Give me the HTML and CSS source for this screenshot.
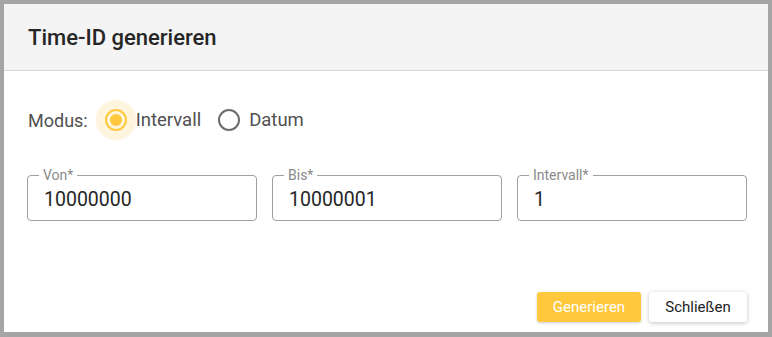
FILE: index.html
```html
<!DOCTYPE html>
<html lang="de">
<head>
    <meta charset="UTF-8">
    <title>Time-ID generieren</title>
    <link rel="stylesheet" href="styles.css">
</head>
<body>
    <div class="dialog">
        <!-- Kopfzeile -->
        <div class="dialog-header">
            <h2 class="dialog-title">Time-ID generieren</h2>
        </div>

        <div class="dialog-content">
            <!-- Modus Auswahl -->
            <div class="mode-row">
                <span class="mode-label">Modus:</span>
                <label class="radio-option checked">
                    <span class="radio-halo"><span class="radio-ring"><span class="radio-dot"></span></span></span>
                    <span class="radio-text">Intervall</span>
                </label>
                <label class="radio-option">
                    <span class="radio-halo"><span class="radio-ring"></span></span>
                    <span class="radio-text">Datum</span>
                </label>
            </div>

            <!-- Eingabefelder -->
            <div class="field-row">
                <fieldset class="field">
                    <legend>Von*</legend>
                    <div class="field-value">10000000</div>
                </fieldset>
                <fieldset class="field">
                    <legend>Bis*</legend>
                    <div class="field-value">10000001</div>
                </fieldset>
                <fieldset class="field">
                    <legend>Intervall*</legend>
                    <div class="field-value">1</div>
                </fieldset>
            </div>
        </div>

        <!-- Aktionen -->
        <div class="dialog-actions">
            <button class="btn btn-primary">Generieren</button>
            <button class="btn btn-secondary">Schließen</button>
        </div>
    </div>
</body>
</html>
```

FILE: styles.css
```css
/* Dialog styles */
body {
    margin: 0;
    padding: 4px 4px 5px 4px;
    background-color: #a5a5a5;
    font-family: Roboto, "Liberation Sans", sans-serif;
}

.dialog {
    width: 764px;
    height: 328px;
    background-color: #ffffff;
    display: flex;
    flex-direction: column;
}

.dialog-header {
    height: 66px;
    background-color: #f4f4f4;
    border-bottom: 1px solid #d8d8d8;
    display: flex;
    align-items: center;
    padding-left: 24px;
}

.dialog-title {
    margin: 0;
    font-size: 22px;
    font-weight: 500;
    color: #262626;
}

.dialog-content {
    padding: 29px 21px 0 23px;
    flex: 1;
}

.mode-row {
    display: flex;
    align-items: center;
    height: 40px;
}

.mode-label {
    font-size: 18px;
    color: #505050;
    margin-left: 1px;
    margin-right: 8px;
}

.radio-option {
    display: flex;
    align-items: center;
    margin-right: 8px;
}

.radio-halo {
    width: 40px;
    height: 40px;
    border-radius: 50%;
    display: flex;
    align-items: center;
    justify-content: center;
}

.radio-option.checked .radio-halo {
    background-color: #fff5de;
}

.radio-ring {
    box-sizing: border-box;
    width: 22px;
    height: 22px;
    border: 2px solid #6b6b6b;
    border-radius: 50%;
    display: flex;
    align-items: center;
    justify-content: center;
}

.radio-option.checked .radio-ring {
    border-color: #ffc83d;
}

.radio-dot {
    width: 12px;
    height: 12px;
    border-radius: 50%;
    background-color: #ffc83d;
}

.radio-text {
    font-size: 18.5px;
    color: #505050;
}

.field-row {
    display: grid;
    grid-template-columns: repeat(3, 1fr);
    gap: 15px;
    margin-top: 28px;
}

.field {
    margin: 0;
    height: 53px;
    box-sizing: border-box;
    border: 1px solid #a0a0a0;
    border-radius: 4px;
    padding: 0 16px;
    min-width: 0;
}

.field legend {
    font-size: 14px;
    line-height: 14px;
    color: #8a8a8a;
    padding: 0 4px;
    margin-left: -5px;
}

.field-value {
    font-size: 19.5px;
    color: #262626;
    line-height: 24px;
    margin-top: 6px;
}

.dialog-actions {
    display: flex;
    justify-content: flex-end;
    gap: 8px;
    padding: 0 21px 10px 0;
}

.btn {
    height: 30px;
    border: none;
    border-radius: 3px;
    font-family: Roboto, "Liberation Sans", sans-serif;
    font-size: 15px;
    padding: 0 10px;
    cursor: pointer;
}

.btn-primary {
    background-color: #ffc83d;
    color: #ffffff;
    width: 104px;
    box-shadow: 0 1px 3px rgba(0, 0, 0, 0.2);
}

.btn-secondary {
    background-color: #ffffff;
    color: #222222;
    width: 98px;
    box-shadow: 0 1px 4px rgba(0, 0, 0, 0.25);
}
```
